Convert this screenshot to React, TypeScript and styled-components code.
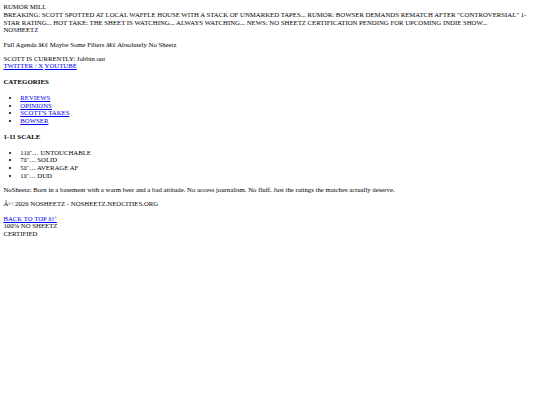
import React from "react";
import styled, { createGlobalStyle } from "styled-components";

const Global = createGlobalStyle`
  body {
    margin: 3.4px;
    font-family: "Liberation Serif", "Times New Roman", serif;
    font-size: 6.75px;
    line-height: 7.6px;
    color: #000;
    background: #fff;
  }
`;

const Line = styled.div``;

const Para = styled.p`
  margin: 6.75px 0;
`;

const Heading = styled.h4`
  font-size: 6.9px;
  font-weight: bold;
  margin: 8.3px 0;
`;

const List = styled.ul`
  margin: 6.75px 0;
  padding-left: 16.9px;
`;

const Item = styled.li``;

const Link = styled.a`
  color: #0000ee;
  text-decoration: underline;
`;

export default function App() {
  return (
    <>
      <Global />
      <Line>RUMOR MILL</Line>
      <Line>
        BREAKING: SCOTT SPOTTED AT LOCAL WAFFLE HOUSE WITH A STACK OF UNMARKED TAPES... RUMOR: BOWSER DEMANDS REMATCH AFTER "CONTROVERSIAL" 1-STAR RATING... HOT TAKE: THE SHEET IS WATCHING... ALWAYS WATCHING... NEWS: NO SHEETZ CERTIFICATION PENDING FOR UPCOMING INDIE SHOW...
      </Line>
      <Line>NOSHEETZ</Line>
      <Para>Full Agenda â€¢ Maybe Some Filters â€¢ Absolutely No Sheetz</Para>
      <Line>SCOTT IS CURRENTLY: Jobbin out</Line>
      <Line>
        <Link href="#">TWITTER / X</Link> <Link href="#">YOUTUBE</Link>
      </Line>
      <Heading>CATEGORIES</Heading>
      <List>
        <Item><Link href="#">REVIEWS</Link></Item>
        <Item><Link href="#">OPINIONS</Link></Item>
        <Item><Link href="#">SCOTT'S TAKES</Link></Item>
        <Item><Link href="#">BOWSER</Link></Item>
      </List>
      <Heading>1-11 SCALE</Heading>
      <List>
        <Item>11â˜… UNTOUCHABLE</Item>
        <Item>7â˜… SOLID</Item>
        <Item>5â˜… AVERAGE AF</Item>
        <Item>1â˜… DUD</Item>
      </List>
      <Para>
        NoSheetz: Born in a basement with a warm beer and a bad attitude. No access journalism. No fluff. Just the ratings the matches actually deserve.
      </Para>
      <Para>Â© 2026 NOSHEETZ - NOSHEETZ.NEOCITIES.ORG</Para>
      <Line>
        <Link href="#">BACK TO TOP â†‘</Link>
      </Line>
      <Line>100% NO SHEETZ</Line>
      <Line>CERTIFIED</Line>
    </>
  );
}
